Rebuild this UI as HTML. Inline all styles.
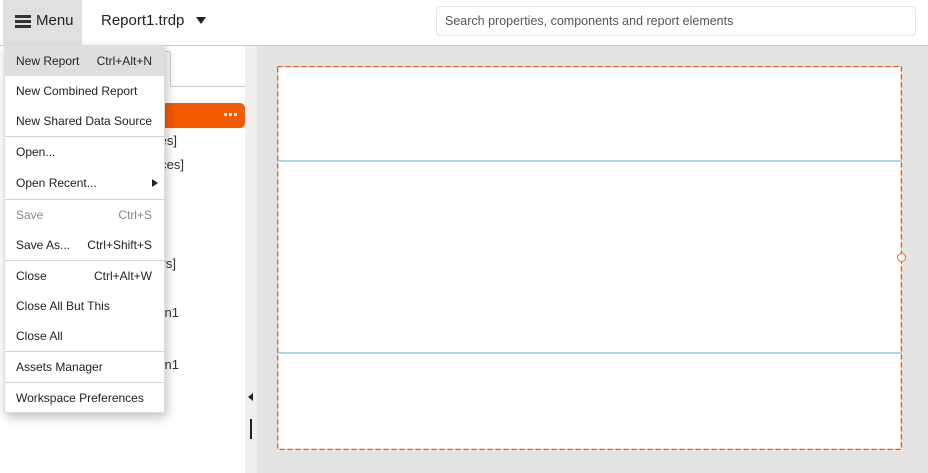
<!DOCTYPE html>
<html><head><meta charset="utf-8"><style>
*{box-sizing:border-box;margin:0;padding:0}
body{width:928px;height:473px;overflow:hidden;font-family:"Liberation Sans",Arial,sans-serif;font-size:13px;color:#222;background:#e3e3e3;position:relative}
.hdr{position:absolute;left:0;top:0;width:928px;height:46px;background:#fff;border-bottom:1px solid #ccc}
.menubtn{position:absolute;left:3px;top:0;width:79px;height:45px;background:#e0e0e0;font-size:15px;line-height:42px;padding-left:12px}
.ham{position:absolute;left:12px;top:15px;width:16px;height:13px}
.ham i{display:block;height:3px;background:#333;margin-bottom:2px}
.file{position:absolute;left:101px;top:12px;font-size:15px}
.caret{position:absolute;left:196px;top:17px;border-left:5px solid transparent;border-right:5px solid transparent;border-top:7px solid #222}
.search{position:absolute;left:436px;top:6px;width:480px;height:30px;border:1px solid #e6e6e6;border-radius:4px;padding-left:8px;line-height:28px;color:#555;font-size:12.5px;white-space:nowrap}
.left{position:absolute;left:0;top:46px;width:245px;height:427px;background:#fff}
.strip{position:absolute;left:245px;top:46px;width:12px;height:427px;background:#efefef}
.tab{position:absolute;left:100px;top:51px;width:71px;height:36px;border:1px solid #ccc;border-bottom:none;border-radius:0 3px 0 0}
.tabline{position:absolute;left:170px;top:86px;width:75px;height:1px;background:#ccc}
.sel{position:absolute;left:10px;top:103px;width:235px;height:25px;background:#f45b00;border-radius:0 5px 5px 0}
.dots{position:absolute;left:224px;top:113px;width:20px;height:4px}
.dots i{float:left;width:3px;height:3px;background:#fff;margin-right:2px}
.frag{position:absolute;font-size:13px;color:#333;white-space:nowrap;text-align:right;width:120px}
.pg{position:absolute;left:277px;top:66px}
.handle{position:absolute;left:897px;top:253px;width:9px;height:9px;border:1px solid #f26a1b;border-radius:50%;background:#fff}
.arr{position:absolute;left:248px;top:393px;border-top:4px solid transparent;border-bottom:4px solid transparent;border-right:5px solid #222}
.bar{position:absolute;left:250px;top:419px;width:2px;height:20px;background:#222}
.menu{position:absolute;left:4px;top:45px;width:161px;height:368px;background:#fff;border:1px solid #ddd;box-shadow:2px 4px 10px rgba(0,0,0,.25)}
.it{height:30px;line-height:30px;padding:0 12px 0 11px;display:flex;justify-content:space-between;font-size:12px;color:#222;white-space:nowrap;position:relative}
.it.h{background:#dedede}
.it.d{color:#888}
.sep{height:1px;background:#d0d0d0}
.tri{position:absolute;right:6px;top:12px;width:0;height:0;border-top:4px solid transparent;border-bottom:4px solid transparent;border-left:6px solid #222}
</style></head><body>
<div class="hdr">
<div class="menubtn"><div class="ham"><i></i><i></i><i></i></div><span style="margin-left:21px">Menu</span></div>
<div class="file">Report1.trdp</div><div class="caret"></div>
<div class="search">Search properties, components and report elements</div>
</div>
<div class="left"></div>
<div class="strip"></div>
<div class="tab"></div><div class="tabline"></div>
<div class="sel"></div>
<div class="dots"><i></i><i></i><i></i></div>
<div class="frag" style="left:57px;top:133px">[Data Sources]</div>
<div class="frag" style="left:64px;top:157px">[Data Sources]</div>
<div class="frag" style="left:56px;top:256px">[Parameters]</div>
<div class="frag" style="left:59px;top:305px">section1</div>
<div class="frag" style="left:59px;top:357px">section1</div>
<svg class="pg" width="626" height="385" viewBox="0 0 626 385">
<rect x="0" y="0" width="626" height="385" fill="#fff"/>
<line x1="1" y1="95" x2="624" y2="95" stroke="#add8e6" stroke-width="2"/>
<line x1="1" y1="287" x2="624" y2="287" stroke="#add8e6" stroke-width="2"/>
<rect x="0.5" y="0.5" width="624" height="383" fill="none" stroke="#add8e6" stroke-width="1"/>
<rect x="0.5" y="0.5" width="624" height="383" fill="none" stroke="#f05a00" stroke-width="1.6" stroke-dasharray="5 3"/>
</svg>
<div class="handle"></div>
<div class="arr"></div><div class="bar"></div>
<div class="menu">
<div class="it h"><span>New Report</span><span>Ctrl+Alt+N</span></div>
<div class="it"><span>New Combined Report</span></div>
<div class="it"><span>New Shared Data Source</span></div>
<div class="sep"></div>
<div class="it"><span>Open...</span></div>
<div class="it" style="height:32px;line-height:32px"><span>Open Recent...</span><span class="tri"></span></div>
<div class="sep"></div>
<div class="it d"><span>Save</span><span>Ctrl+S</span></div>
<div class="it"><span>Save As...</span><span>Ctrl+Shift+S</span></div>
<div class="sep"></div>
<div class="it"><span>Close</span><span>Ctrl+Alt+W</span></div>
<div class="it"><span>Close All But This</span></div>
<div class="it"><span>Close All</span></div>
<div class="sep"></div>
<div class="it"><span>Assets Manager</span></div>
<div class="sep"></div>
<div class="it"><span>Workspace Preferences</span></div>
</div>
</body></html>
